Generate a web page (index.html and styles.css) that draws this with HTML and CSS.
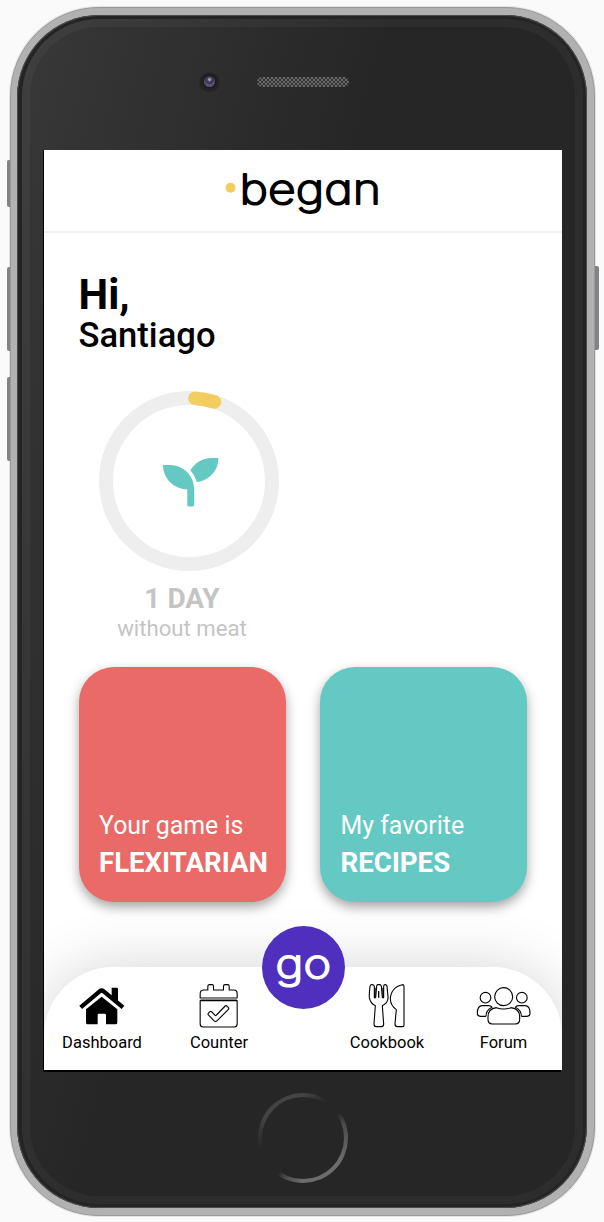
FILE: index.html
```html
<!DOCTYPE html>
<html lang="en">
<head>
<meta charset="utf-8">
<title>began</title>
<link rel="stylesheet" href="styles.css">
</head>
<body>
<div class="phone">
  <span class="side-button mute"></span>
  <span class="side-button volume-up"></span>
  <span class="side-button volume-down"></span>
  <span class="side-button power"></span>
  <div class="bezel">
    <div class="face">
      <div class="sensors">
        <span class="camera"><span class="lens"></span></span>
        <span class="speaker"></span>
      </div>
      <div class="screen">
        <header class="header">
          <svg class="logo" width="160" height="56" viewBox="0 0 160 56">
            <circle cx="7.500" cy="24.700" r="5" fill="#f3cd5d"/>
            <text class="logo-text" x="16.500" y="40.700" textLength="141.500" lengthAdjust="spacingAndGlyphs">began</text>
          </svg>
        </header>
        <main class="main">
          <h1 class="hello">Hi,</h1>
          <h2 class="name">Santiago</h2>
          <section class="progress">
            <svg class="ring" width="180" height="180" viewBox="0 0 180 180">
              <circle cx="90" cy="90" r="83" fill="none" stroke="#eee" stroke-width="14"/>
              <path d="M96 7.200A83 83 0 0 1 115.500 11" fill="none" stroke="#f3cd5d" stroke-width="13.500" stroke-linecap="round"/>
              <svg x="64" y="63.500" width="55.500" height="55.500" viewBox="0 0 512 512">
                <path fill="#65c9c3" d="M64 96H0c0 123.700 100.300 224 224 224v144c0 8.800 7.200 16 16 16h32c8.800 0 16-7.200 16-16V320C288 196.300 187.700 96 64 96zm384-64c-84.200 0-157.400 46.500-195.700 115.200 27.700 30.200 48.200 66.900 59 107.600C424 243.100 512 147.900 512 32h-64z"/>
              </svg>
            </svg>
            <p class="days">1 DAY</p>
            <p class="caption">without meat</p>
          </section>
          <section class="cards">
            <article class="card coral"><p class="card-lead">Your game is</p><p class="card-title">FLEXITARIAN</p></article>
            <article class="card teal"><p class="card-lead">My favorite</p><p class="card-title">RECIPES</p></article>
          </section>
        </main>
        <nav class="nav">
          <a class="tab">
            <svg class="icon" width="48" height="44" viewBox="116 251 144 132">
              <path d="M217 262h15q4 0 4 4v38l-19-15z"/>
              <path d="M124 321L181 273Q187 268 193 273L251 321" fill="none" stroke="#000" stroke-width="13"/>
              <path d="M187 289L234 327V367q0 5-5 5H200V344q0-4-4-4H179q-4 0-4 4V372H145q-5 0-5-5V327Z"/>
            </svg>
            <span>Dashboard</span>
          </a>
          <a class="tab">
            <svg class="icon line" width="48" height="44" viewBox="465.500 251 144 132">
              <path d="M481 293V280q0-11 11-11H504V258q0-5 5-5h8q4 0 4 5V269H551V258q0-5 5-5h8q4 0 4 5V269H582q10 0 10 11V293Z"/>
              <path d="M482 297H591" stroke="#888" stroke-width="6"/>
              <path d="M481 301H592V371q0 9-9 9H490q-9 0-9-9Z"/>
              <path d="M505 340L510 334Q513 332 516 335L526 345Q528 347 530 344L556 317Q559 314 562 318L566 322Q568 325 565 328L532 361Q527 366 522 361L505 343Q503 341 505 340Z"/>
            </svg>
            <span>Counter</span>
          </a>
          <a class="go">
            <svg width="83" height="83" viewBox="0 0 83 83">
              <text class="go-text" x="13.500" y="51.500" textLength="55.500" lengthAdjust="spacingAndGlyphs">go</text>
            </svg>
          </a>
          <a class="tab">
            <svg class="icon line" width="48" height="44" viewBox="370 251 144 132">
              <path d="M396 253Q391 253 391 259C389 276 388 284 389 292C391 304 399 312 407 316L403 371Q403 379 410 379H425Q432 379 432 371L428 316C438 311 446 302 445 290L442 258Q441 253 437 253Q432 253 432 258V291Q431 294 428 291L425 258Q424 253 420 253H415Q411 253 411 258L408 291Q406 295 404 291V258Q403 253 396 253Z"/>
              <path d="M406 262V292M430 262V292M417 272V292" stroke-width="4"/>
              <path d="M493 258Q493 253 488 253C466 257 452 275 452 297C453 312 461 322 470 328L466 371Q466 379 474 379H489Q493 379 493 374Z"/>
            </svg>
            <span>Cookbook</span>
          </a>
          <a class="tab">
            <svg class="icon line" width="56" height="44" viewBox="167 251 168 132">
              <circle cx="250" cy="289" r="27"/>
              <circle cx="195.500" cy="292" r="16"/>
              <circle cx="304.500" cy="292" r="16"/>
              <path d="M228 322Q250 330 272 322Q298 325 298 350V357Q298 371 285 371H216Q203 371 203 357V350Q203 325 228 322Z"/>
              <path d="M197 348H180Q171 348 171 339C171 324 175 316 186 316H205Q212 316 215 321Q197 330 197 348"/>
              <path d="M303 348H320Q329 348 329 339C329 324 325 316 314 316H295Q288 316 285 321Q303 330 303 348"/>
            </svg>
            <span>Forum</span>
          </a>
        </nav>
      </div>
      <div class="home-area"><span class="home-button"></span></div>
    </div>
  </div>
</div>
</body>
</html>
```
FILE: styles.css
```css
* { box-sizing: border-box; }
body { margin: 0; height: 1222px; padding: 7px 0 0 10px; background: #fafafa; font-family: Roboto, sans-serif; color: #000; overflow: hidden; }
h1, h2, p { margin: 0; }

.phone { position: relative; width: 585px; height: 1209px; padding: 7px 7px 7px 6px; border: 1px solid #999; border-radius: 89px; background: #b1b1b1; box-shadow: 0 0 0 1px #e2e2e2; }
.side-button { position: absolute; left: -4px; width: 3px; height: 84px; border-radius: 2px 0 0 2px; background: #828287; }
.mute { top: 152px; height: 47px; }
.volume-up { top: 259px; }
.volume-down { top: 369px; }
.power { left: auto; right: -5px; top: 258px; width: 4px; border-radius: 0 2px 2px 0; }

.bezel { height: 1193px; padding: 4px 4px 4px 5px; border-radius: 82px; background: #242424; box-shadow: inset 0 0 0 1px #4b4b4b; }
.face { height: 1185px; padding: 131px 21px 0 22px; border-radius: 77px; background: linear-gradient(105deg, #383838 0, #262626 42%); box-shadow: inset 0 0 0 8px rgba(255, 255, 255, .035); display: flex; flex-direction: column; }
.sensors { flex: none; height: 24px; margin: -81px 0 57px; padding-left: 155px; display: flex; align-items: center; gap: 37px; }
.camera { width: 21px; height: 21px; border-radius: 50%; background: #242424; box-shadow: inset 0 1px 1px #363636; display: grid; place-items: center; }
.lens { width: 11px; height: 11px; border-radius: 50%; background: radial-gradient(circle at 50% 32%, #999 0 1px, #51466a 2px, #3a3055 4px, #594e76 5px); box-shadow: 0 0 2px 1px #161616; }
.speaker { width: 92px; height: 10px; margin-top: 2px; border-radius: 5px; background: repeating-conic-gradient(#686868 0 25%, #343434 0 50%) 0 0 / 4px 4px; }

.screen { flex: none; height: 920px; width: 518px; background: #fff; box-shadow: -1px 0 0 #000, -1px 2px 0 #000; display: flex; flex-direction: column; overflow: hidden; }
.header { flex: none; height: 83px; border-bottom: 2px solid #f0f0f0; padding: 13px 0 0 179px; }
.logo { display: block; }
.logo-text, .go-text { font-family: Inter, sans-serif; font-weight: 200; font-size: 41px; font-feature-settings: "cv11", "ss03"; stroke-linejoin: round; stroke-linecap: round; }
.logo-text { stroke: #000; stroke-width: 1.800px; }
.go-text { font-size: 39px; fill: #fff; stroke: #fff; stroke-width: 1.800px; }

.main { padding: 41px 0 0 34.500px; }
.hello { font-size: 42px; line-height: 42px; font-weight: 700; }
.name { margin-top: 2px; font-size: 34.600px; line-height: 34px; font-weight: 500; }
.progress { width: 207px; margin-top: 39px; color: #c4c4c4; text-align: center; }
.ring { display: block; margin-left: 20.500px; }
.days { margin-top: 14px; font-size: 28px; line-height: 28px; font-weight: 700; }
.caption { margin-top: 4px; font-size: 22.200px; line-height: 22px; }
.cards { margin-top: 28px; display: flex; gap: 34.500px; }
.card { width: 207px; height: 235px; padding: 0 0 23px 20.500px; border-radius: 35px; color: #fff; display: flex; flex-direction: column; justify-content: flex-end; box-shadow: 0 5px 12px rgba(0, 0, 0, .36); }
.coral { background: #e96a66; }
.teal { background: #65c9c3; }
.card-lead { font-size: 24.900px; line-height: 30px; margin-bottom: 6px; }
.card-title { font-size: 27.600px; line-height: 32px; font-weight: 700; }

.nav { position: relative; margin-top: auto; height: 103px; border-radius: 69px 69px 0 0; background: #fff; box-shadow: 0 0 60px rgba(0, 0, 0, .17); display: grid; grid-template-columns: 116px 118px 50px 118px 115px; justify-items: center; }
.tab { padding-top: 17px; display: flex; flex-direction: column; align-items: center; font-size: 16.500px; line-height: 20px; }
.tab span { margin-top: 5px; }
.icon { display: block; }
.line { fill: none; stroke: #000; stroke-width: 3.300; stroke-linejoin: round; }
.go { width: 83px; height: 83px; margin: -41.500px 0 0; border-radius: 50%; background: #4e2fbe; }
.go svg { display: block; }

.home-area { flex: 1; display: flex; justify-content: center; padding-top: 23px; }
.home-button { width: 90px; height: 90px; border-radius: 50%; background: conic-gradient(from 0deg, #444 0deg, #262626 35deg 55deg, #4a4a4a 70deg, #6c6c6c 120deg, #6c6c6c 180deg, #4a4a4a 205deg, #262626 215deg 255deg, #444 300deg, #444 360deg); display: grid; place-items: center; }
.home-button::after { content: ""; width: 82px; height: 82px; border-radius: 50%; background: #262626; }
```
